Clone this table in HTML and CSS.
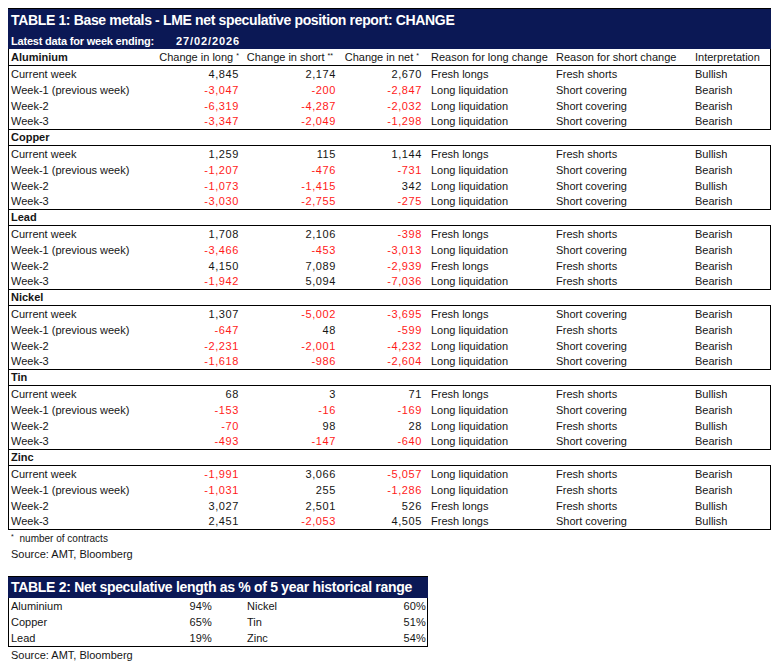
FILE: index.html
```html
<!DOCTYPE html>
<html lang="en">
<head>
<meta charset="utf-8">
<title>LME net speculative position report</title>
<link rel="stylesheet" href="styles.css">
</head>
<body>
<section class="t1">
  <header class="t1-title">
    <h1 class="t1-heading">TABLE 1: Base metals - LME net speculative position report: CHANGE</h1>
    <div class="t1-sub"><span class="sub-label">Latest data for week ending:</span><span class="sub-date">27/02/2026</span></div>
  </header>

  <div class="ghead ghead-first row">
    <div class="c1 b">Aluminium</div>
    <div class="c2 hnum">Change in long <sup>*</sup></div>
    <div class="c3 hnum">Change in short <sup>**</sup></div>
    <div class="c4 hnum">Change in net <sup>*</sup></div>
    <div class="c5">Reason for long change</div>
    <div class="c6">Reason for short change</div>
    <div class="c7">Interpretation</div>
  </div>
  <div class="box">
    <div class="row"><div class="c1">Current week</div><div class="c2 num">4,845</div><div class="c3 num">2,174</div><div class="c4 num">2,670</div><div class="c5">Fresh longs</div><div class="c6">Fresh shorts</div><div class="c7">Bullish</div></div>
    <div class="row"><div class="c1">Week-1 (previous week)</div><div class="c2 num neg">-3,047</div><div class="c3 num neg">-200</div><div class="c4 num neg">-2,847</div><div class="c5">Long liquidation</div><div class="c6">Short covering</div><div class="c7">Bearish</div></div>
    <div class="row"><div class="c1">Week-2</div><div class="c2 num neg">-6,319</div><div class="c3 num neg">-4,287</div><div class="c4 num neg">-2,032</div><div class="c5">Long liquidation</div><div class="c6">Short covering</div><div class="c7">Bearish</div></div>
    <div class="row"><div class="c1">Week-3</div><div class="c2 num neg">-3,347</div><div class="c3 num neg">-2,049</div><div class="c4 num neg">-1,298</div><div class="c5">Long liquidation</div><div class="c6">Short covering</div><div class="c7">Bearish</div></div>
  </div>

  <div class="ghead"><span class="b">Copper</span></div>
  <div class="box">
    <div class="row"><div class="c1">Current week</div><div class="c2 num">1,259</div><div class="c3 num">115</div><div class="c4 num">1,144</div><div class="c5">Fresh longs</div><div class="c6">Fresh shorts</div><div class="c7">Bullish</div></div>
    <div class="row"><div class="c1">Week-1 (previous week)</div><div class="c2 num neg">-1,207</div><div class="c3 num neg">-476</div><div class="c4 num neg">-731</div><div class="c5">Long liquidation</div><div class="c6">Short covering</div><div class="c7">Bearish</div></div>
    <div class="row"><div class="c1">Week-2</div><div class="c2 num neg">-1,073</div><div class="c3 num neg">-1,415</div><div class="c4 num">342</div><div class="c5">Long liquidation</div><div class="c6">Short covering</div><div class="c7">Bullish</div></div>
    <div class="row"><div class="c1">Week-3</div><div class="c2 num neg">-3,030</div><div class="c3 num neg">-2,755</div><div class="c4 num neg">-275</div><div class="c5">Long liquidation</div><div class="c6">Short covering</div><div class="c7">Bearish</div></div>
  </div>

  <div class="ghead"><span class="b">Lead</span></div>
  <div class="box">
    <div class="row"><div class="c1">Current week</div><div class="c2 num">1,708</div><div class="c3 num">2,106</div><div class="c4 num neg">-398</div><div class="c5">Fresh longs</div><div class="c6">Fresh shorts</div><div class="c7">Bearish</div></div>
    <div class="row"><div class="c1">Week-1 (previous week)</div><div class="c2 num neg">-3,466</div><div class="c3 num neg">-453</div><div class="c4 num neg">-3,013</div><div class="c5">Long liquidation</div><div class="c6">Short covering</div><div class="c7">Bearish</div></div>
    <div class="row"><div class="c1">Week-2</div><div class="c2 num">4,150</div><div class="c3 num">7,089</div><div class="c4 num neg">-2,939</div><div class="c5">Fresh longs</div><div class="c6">Fresh shorts</div><div class="c7">Bearish</div></div>
    <div class="row"><div class="c1">Week-3</div><div class="c2 num neg">-1,942</div><div class="c3 num">5,094</div><div class="c4 num neg">-7,036</div><div class="c5">Long liquidation</div><div class="c6">Fresh shorts</div><div class="c7">Bearish</div></div>
  </div>

  <div class="ghead"><span class="b">Nickel</span></div>
  <div class="box">
    <div class="row"><div class="c1">Current week</div><div class="c2 num">1,307</div><div class="c3 num neg">-5,002</div><div class="c4 num neg">-3,695</div><div class="c5">Fresh longs</div><div class="c6">Short covering</div><div class="c7">Bearish</div></div>
    <div class="row"><div class="c1">Week-1 (previous week)</div><div class="c2 num neg">-647</div><div class="c3 num">48</div><div class="c4 num neg">-599</div><div class="c5">Long liquidation</div><div class="c6">Fresh shorts</div><div class="c7">Bearish</div></div>
    <div class="row"><div class="c1">Week-2</div><div class="c2 num neg">-2,231</div><div class="c3 num neg">-2,001</div><div class="c4 num neg">-4,232</div><div class="c5">Long liquidation</div><div class="c6">Short covering</div><div class="c7">Bearish</div></div>
    <div class="row"><div class="c1">Week-3</div><div class="c2 num neg">-1,618</div><div class="c3 num neg">-986</div><div class="c4 num neg">-2,604</div><div class="c5">Long liquidation</div><div class="c6">Short covering</div><div class="c7">Bearish</div></div>
  </div>

  <div class="ghead"><span class="b">Tin</span></div>
  <div class="box">
    <div class="row"><div class="c1">Current week</div><div class="c2 num">68</div><div class="c3 num">3</div><div class="c4 num">71</div><div class="c5">Fresh longs</div><div class="c6">Fresh shorts</div><div class="c7">Bullish</div></div>
    <div class="row"><div class="c1">Week-1 (previous week)</div><div class="c2 num neg">-153</div><div class="c3 num neg">-16</div><div class="c4 num neg">-169</div><div class="c5">Long liquidation</div><div class="c6">Short covering</div><div class="c7">Bearish</div></div>
    <div class="row"><div class="c1">Week-2</div><div class="c2 num neg">-70</div><div class="c3 num">98</div><div class="c4 num">28</div><div class="c5">Long liquidation</div><div class="c6">Fresh shorts</div><div class="c7">Bullish</div></div>
    <div class="row"><div class="c1">Week-3</div><div class="c2 num neg">-493</div><div class="c3 num neg">-147</div><div class="c4 num neg">-640</div><div class="c5">Long liquidation</div><div class="c6">Short covering</div><div class="c7">Bearish</div></div>
  </div>

  <div class="ghead"><span class="b">Zinc</span></div>
  <div class="box">
    <div class="row"><div class="c1">Current week</div><div class="c2 num neg">-1,991</div><div class="c3 num">3,066</div><div class="c4 num neg">-5,057</div><div class="c5">Long liquidation</div><div class="c6">Fresh shorts</div><div class="c7">Bearish</div></div>
    <div class="row"><div class="c1">Week-1 (previous week)</div><div class="c2 num neg">-1,031</div><div class="c3 num">255</div><div class="c4 num neg">-1,286</div><div class="c5">Long liquidation</div><div class="c6">Fresh shorts</div><div class="c7">Bearish</div></div>
    <div class="row"><div class="c1">Week-2</div><div class="c2 num">3,027</div><div class="c3 num">2,501</div><div class="c4 num">526</div><div class="c5">Fresh longs</div><div class="c6">Fresh shorts</div><div class="c7">Bullish</div></div>
    <div class="row"><div class="c1">Week-3</div><div class="c2 num">2,451</div><div class="c3 num neg">-2,053</div><div class="c4 num">4,505</div><div class="c5">Fresh longs</div><div class="c6">Short covering</div><div class="c7">Bullish</div></div>
  </div>

  <p class="footnote"><sup>*</sup> number of contracts</p>
  <p class="source">Source: AMT, Bloomberg</p>
</section>

<section class="t2">
  <h2 class="t2-heading">TABLE 2: Net speculative length as % of 5 year historical range</h2>
  <div class="t2-box">
    <div class="t2-row"><div class="d1">Aluminium</div><div class="d2">94%</div><div class="d3">Nickel</div><div class="d4">60%</div></div>
    <div class="t2-row"><div class="d1">Copper</div><div class="d2">65%</div><div class="d3">Tin</div><div class="d4">51%</div></div>
    <div class="t2-row"><div class="d1">Lead</div><div class="d2">19%</div><div class="d3">Zinc</div><div class="d4">54%</div></div>
  </div>
  <p class="source">Source: AMT, Bloomberg</p>
</section>
</body>
</html>
```

FILE: styles.css
```css
html, body {
  background: #ffffff;
}
body {
  margin: 8px;
  font-family: "Liberation Sans", Arial, sans-serif;
  font-size: 11px;
  color: #151515;
}

.t1 {
  width: 763px;
}

.t1-title {
  background: #0b1855;
  border-top: 1px solid #000;
  color: #ffffff;
}
.t1-heading {
  margin: 0;
  height: 23px;
  line-height: 23px;
  padding-left: 3px;
  font-size: 14px;
  font-weight: bold;
  letter-spacing: -0.35px;
}
.t1-sub {
  height: 17px;
  line-height: 18px;
  padding-left: 3px;
  font-weight: bold;
  font-size: 11px;
  display: flex;
}
.sub-label {
  width: 165px;
  letter-spacing: -0.2px;
}
.sub-date {
  letter-spacing: 0.9px;
}

.row {
  display: grid;
  grid-template-columns: 146px 85px 97px 87px 128px 139px 79px;
  height: 16px;
  line-height: 16px;
  white-space: nowrap;
}
.row > div {
  overflow: visible;
}
.c1 { padding-left: 2px; }
.c2, .c3, .c4 { text-align: right; }
.c2 { padding-right: 1px; }
.c3 { padding-right: 1px; }
.c4 { padding-right: 2px; }
.c5 { padding-left: 7px; }
.c6 { padding-left: 4px; }
.c7 { padding-left: 4px; }

.num {
  letter-spacing: 0.6px;
}
.neg {
  color: #ff1a1a;
}
.hnum.c2 { padding-right: 1px; }
.hnum.c3 { padding-right: 4px; }
.hnum.c4 { padding-right: 5px; }

sup {
  font-size: 7px;
  vertical-align: 0;
  position: relative;
  top: -3px;
}

.b {
  font-weight: bold;
}

.ghead {
  height: 15px;
  line-height: 15px;
  border-left: 1px solid #000;
  padding-left: 2px;
}
.ghead-first {
  height: 16px;
  line-height: 16px;
  padding-left: 0;
  border-right: 1px solid #000;
  grid-template-columns: 146px 85px 97px 87px 128px 139px 78px;
}

.box {
  border: 1px solid #000;
}
.box > .row:last-child {
  height: 15px;
  line-height: 15px;
}

.footnote {
  margin: 0;
  height: 16px;
  line-height: 17px;
  font-size: 10px;
  padding-left: 3px;
}
.footnote sup {
  font-size: 7px;
  top: -3px;
  margin-right: 3px;
}
.source {
  margin: 0;
  height: 16px;
  line-height: 16px;
  padding-left: 3px;
}

.t2 {
  width: 420px;
  margin-top: 14px;
}
.t2-heading {
  margin: 0;
  background: #0b1855;
  color: #ffffff;
  border-top: 1px solid #000;
  height: 21px;
  line-height: 21px;
  padding-left: 3px;
  font-size: 14px;
  font-weight: bold;
  letter-spacing: -0.3px;
  white-space: nowrap;
}
.t2-box {
  border: 1px solid #000;
  border-top: none;
}
.t2-row {
  display: grid;
  grid-template-columns: 141px 63px 140px 1fr;
  height: 16px;
  line-height: 16px;
}
.d1 { padding-left: 2px; }
.d2 { text-align: right; padding-right: 1px; letter-spacing: 0.2px; }
.d3 { padding-left: 34px; }
.d4 { text-align: right; padding-right: 1px; letter-spacing: 0.2px; }
```
